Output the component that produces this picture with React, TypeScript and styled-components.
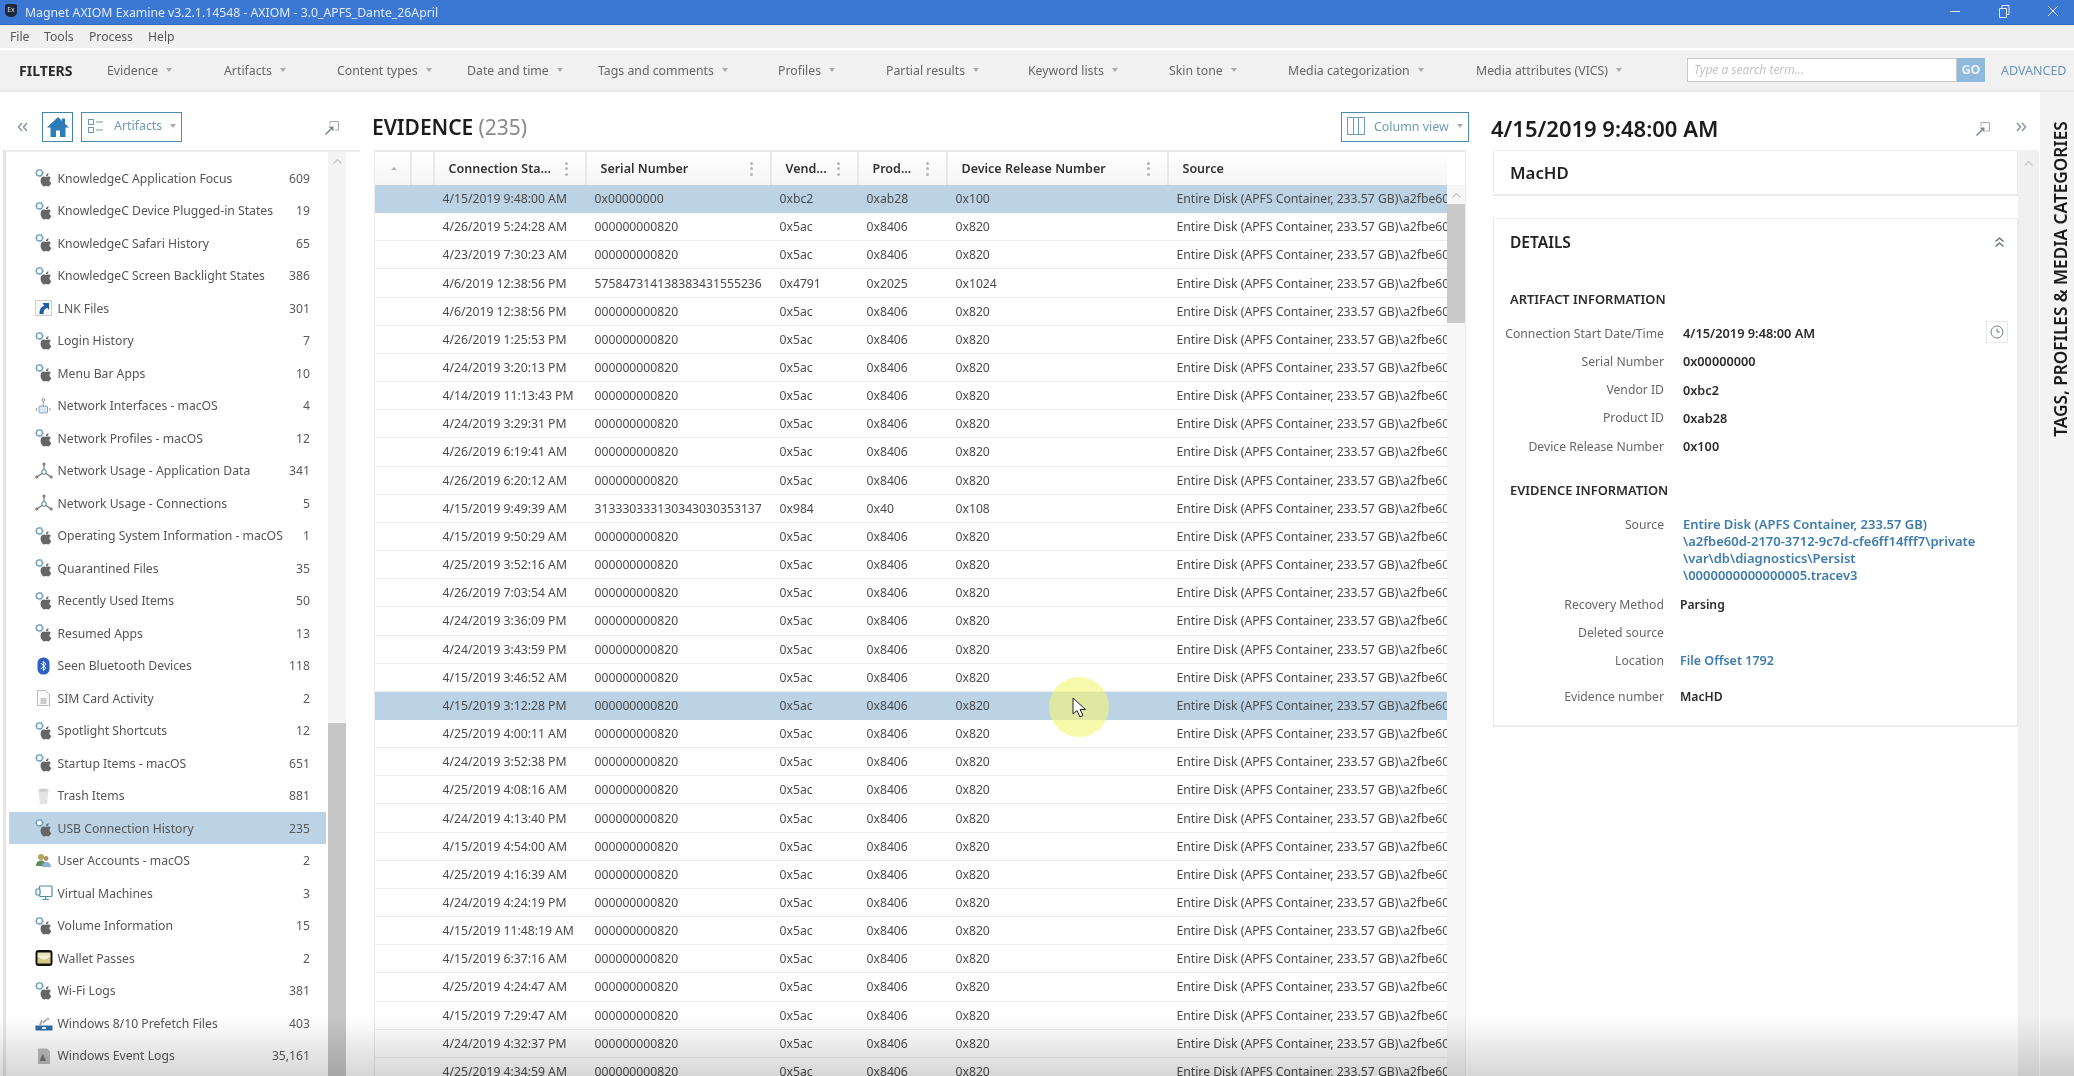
import React from "react";
import styled, { createGlobalStyle } from "styled-components";

const FONT = `"Noto Sans", "Open Sans", "Liberation Sans", sans-serif`;

const Global = createGlobalStyle`
  html, body { margin: 0; padding: 0; background: #fff; overflow: hidden; }
  * { box-sizing: border-box; }
  body { font-family: ${FONT}; }
`;

const Window = styled.div`
  position: relative;
  width: 2074px;
  height: 1076px;
  overflow: hidden;
  background: #fff;
  filter: blur(0.35px);
  font-family: ${FONT};
`;

const TitleBar = styled.header`
  height: 25px;
  background: #3a78d4;
  border-bottom: 1px solid #3369b4;
  display: flex;
  align-items: center;
  padding-left: 5px;
  color: #dfe9f8;
  font-size: 12.25px;
`;
const AppIcon = styled.span`
  width: 12px;
  height: 13px;
  background: #1e2a3c;
  border-radius: 2px 2px 5px 5px;
  color: #ddd;
  font-size: 7px;
  line-height: 11px;
  text-align: center;
  margin-right: 8px;
  margin-top: -3px;
`;
const TitleText = styled.span`
  flex: 1;
  margin-top: 1px;
`;
const WinControls = styled.div`
  display: flex;
  align-items: center;
  color: #e4edf9;
  margin-right: -4px;
  margin-top: -2px;
`;
const WinBtn = styled.span<{ $w: number }>`
  width: ${(p) => p.$w}px;
  display: flex;
  justify-content: center;
`;

const MenuBar = styled.nav`
  height: 23px;
  background: #f0f0f0;
  display: flex;
  align-items: center;
  padding-left: 10px;
  color: #555;
  font-size: 12.2px;
`;
const MenuItem = styled.span<{ $w: number }>`
  width: ${(p) => p.$w}px;
`;

const FilterBar = styled.div`
  margin-top: 2px;
  background: #f1f1f1;
  border-bottom: 2px solid #eaeaea;
  display: flex;
  align-items: center;
  padding-left: 19px;
  color: #666;
  font-size: 12.3px;
  height: 42px;
`;
const FiltersLabel = styled.strong`
  width: 88px;
  color: #2c2c2c;
  font-size: 14px;
  font-weight: 700;
`;
const FilterItem = styled.span<{ $w: number }>`
  width: ${(p) => p.$w}px;
  display: flex;
  align-items: center;
  white-space: nowrap;
`;
const Caret = styled.i`
  display: inline-block;
  width: 0;
  height: 0;
  margin-left: 8px;
  border-left: 3.5px solid transparent;
  border-right: 3.5px solid transparent;
  border-top: 4px solid #aaa;
`;
const SearchBox = styled.div`
  width: 270px;
  height: 24px;
  background: #fff;
  border: 1px solid #c9c9c9;
  color: #c4c4c4;
  font-style: italic;
  font-size: 12px;
  line-height: 22px;
  padding-left: 6px;
`;
const GoButton = styled.span`
  width: 28px;
  height: 24px;
  background: #8fbadb;
  color: #e9f2f9;
  font-weight: 700;
  font-size: 12.5px;
  line-height: 24px;
  text-align: center;
`;
const AdvancedLink = styled.span`
  margin-left: 16px;
  color: #6b96b5;
  font-size: 12.5px;
`;

const Main = styled.main`
  display: flex;
  height: 984px;
`;

const LeftPane = styled.section`
  width: 360px;
  padding-left: 6px;
  position: relative;
  &::before {
    content: "";
    position: absolute;
    left: 3px;
    top: 58px;
    bottom: 0;
    width: 3px;
    background: #e6e6e6;
  }
`;
const PaneTools = styled.div`
  height: 58px;
  display: flex;
  align-items: center;
  padding-left: 11px;
  position: relative;
  padding-top: 11px;
`;
const Chevrons = styled.span`
  display: inline-flex;
  width: 14px;
`;
const HomeBtn = styled.button`
  width: 31px;
  height: 30px;
  margin-left: 11px;
  border: 1px solid #3f86a8;
  background: #fff;
  padding: 0;
  display: flex;
  align-items: center;
  justify-content: center;
`;
const OutlineBtn = styled.button<{ $w: number }>`
  width: ${(p) => p.$w}px;
  height: 30px;
  border: 1px solid #4d8cab;
  background: #fff;
  padding: 0 0 2px 5px;
  display: flex;
  align-items: center;
  color: #6f9ab6;
  font-family: ${FONT};
  font-size: 12.4px;
`;
const ArtifactsBtn = styled(OutlineBtn)`
  margin-left: 8px;
`;
const BtnLabel = styled.span`
  margin-left: 9px;
`;
const PinSlot = styled.span`
  position: absolute;
  right: 20px;
  top: 28px;
  display: flex;
`;
const ListFrame = styled.div`
  height: 926px;
  display: flex;
  border-top: 2px solid #eee;
`;
const List = styled.ul`
  list-style: none;
  margin: 0;
  padding: 9.75px 0 0 3px;
  width: 320px;
`;
const ListRow = styled.li<{ $sel?: boolean }>`
  height: 32.5px;
  display: flex;
  align-items: center;
  padding: 0 16px 0 26px;
  background: ${(p) => (p.$sel ? "#bcd3e6" : "transparent")};
  color: #555;
  font-size: 12.2px;
  white-space: nowrap;
`;
const RowIcon = styled.span`
  width: 18px;
  height: 18px;
  margin-right: 4.5px;
  display: flex;
  flex: none;
`;
const RowName = styled.span`
  flex: 1;
`;
const RowCount = styled.span`
  color: #5a5a5a;
`;
const ListScroll = styled.div`
  margin-left: 2px;
  width: 18px;
  background: #f4f4f4;
  position: relative;
  display: flex;
  justify-content: center;
  padding-top: 6px;
`;
const ListThumb = styled.div`
  position: absolute;
  left: 0;
  right: 0;
  top: 571px;
  bottom: 0;
  background: #c6c6c6;
`;

const Center = styled.section`
  width: 1120px;
  padding-left: 14px;
`;
const CenterHead = styled.div`
  height: 58px;
  display: flex;
  align-items: center;
  padding-top: 11px;
  position: relative;
`;
const PageTitle = styled.h1`
  margin: 0 0 0 -2px;
  font-size: 21px;
  font-weight: 600;
  color: #1c1c1c;
  letter-spacing: -0.05px;
`;
const TitleCount = styled.span`
  font-weight: 400;
  color: #8a8a8a;
`;
const ColumnBtn = styled(OutlineBtn)`
  position: absolute;
  right: 11px;
  top: 20px;
`;
const Table = styled.div`
  width: 1092px;
  height: 926px;
  border-top: 2px solid #e9e9e9;
  border-left: 1px solid #eaeaea;
  border-right: 1px solid #eaeaea;
  position: relative;
  overflow: hidden;
`;
const COLS = "37px 23px 152px 185px 87px 89px 221px 279px";
const HeadRow = styled.div`
  display: grid;
  grid-template-columns: ${COLS};
  height: 33px;
  background: linear-gradient(#fff, #f5f5f5);
  width: 1072px;
`;
const HeadCell = styled.div`
  display: flex;
  align-items: center;
  justify-content: space-between;
  padding: 0 17.5px 0 13.5px;
  border-right: 2px solid #e8e8e8;
  font-size: 12.5px;
  font-weight: 600;
  color: #333;
  white-space: nowrap;
  &:last-child {
    border-right: 0;
  }
`;
const SortCell = styled(HeadCell)`
  justify-content: center;
  padding: 0;
`;
const Kebab = styled.span`
  display: flex;
  flex-direction: column;
  gap: 2.5px;
  & > i {
    width: 3px;
    height: 3px;
    background: #b5b5b5;
    border-radius: 50%;
  }
`;
const SortUp = styled.i`
  width: 0;
  height: 0;
  margin-left: 2px;
  border-left: 3px solid transparent;
  border-right: 3px solid transparent;
  border-bottom: 3.5px solid #b5b5b5;
`;
const BodyRow = styled.div<{ $sel?: boolean }>`
  display: grid;
  grid-template-columns: ${COLS};
  height: 28.17px;
  width: 1072px;
  background: ${(p) => (p.$sel ? "#bcd3e6" : "#fff")};
  border-bottom: 1px solid ${(p) => (p.$sel ? "#bcd3e6" : "#ececec")};
  align-items: center;
  font-size: 12.2px;
  color: #4a4a4a;
  white-space: nowrap;
  overflow: hidden;
`;
const Cell = styled.div`
  padding-left: 7.5px;
  overflow: hidden;
`;
const TableScroll = styled.div`
  position: absolute;
  right: 0;
  top: 33px;
  bottom: 0;
  width: 18px;
  background: #f6f6f6;
  display: flex;
  justify-content: center;
  padding-top: 7px;
`;
const TableThumb = styled.div`
  position: absolute;
  left: 0;
  right: 0;
  top: 19px;
  height: 119px;
  background: #c9c9c9;
`;
const TableHeadFill = styled.div`
  position: absolute;
  right: 0;
  top: 0;
  height: 33px;
  width: 18px;
  background: #fff;
`;

const Highlight = styled.div`
  position: absolute;
  left: 1049px;
  top: 677px;
  width: 60px;
  height: 60px;
  border-radius: 50%;
  background: rgba(246, 246, 120, 0.62);
  z-index: 5;
`;
const Pointer = styled.svg`
  position: absolute;
  left: 1072px;
  top: 697px;
  z-index: 6;
`;

const RightPane = styled.aside`
  width: 560px;
  padding-left: 11px;
  position: relative;
`;
const RightHead = styled.div`
  height: 58px;
  display: flex;
  align-items: center;
  position: relative;
  padding-top: 13px;
`;
const DateTitle = styled.h2`
  margin: 0;
  font-size: 22px;
  font-weight: 600;
  color: #1c1c1c;
`;
const RightPin = styled.span`
  position: absolute;
  left: 484px;
  top: 29px;
  display: flex;
`;
const RightChev = styled.span`
  position: absolute;
  left: 525px;
  top: 30px;
  display: flex;
`;
const RightTrack = styled.div`
  position: absolute;
  left: 538px;
  top: 58px;
  bottom: 0;
  width: 21px;
  background: #f0f0f0;
  display: flex;
  justify-content: center;
  padding-top: 10px;
`;
const Card = styled.div`
  width: 526px;
  margin-left: 2px;
  background: #fff;
  border: 1px solid #ececec;
  border-width: 1px 2px 2px 1px;
`;
const DeviceCard = styled(Card)`
  height: 46px;
  padding: 0 16px;
  display: flex;
  align-items: center;
  font-size: 16.8px;
  font-weight: 600;
  color: #222;
`;
const DetailsCard = styled(Card)`
  margin-top: 22px;
  height: 509px;
  position: relative;
`;
const DetailsHead = styled.div`
  height: 45px;
  margin-bottom: 2px;
  padding: 0 12px 0 16px;
  display: flex;
  align-items: center;
  justify-content: space-between;
  font-size: 15.5px;
  font-weight: 600;
  color: #222;
`;
const SectionTitle = styled.h3<{ $mt: number }>`
  margin: ${(p) => p.$mt}px 0 0 16px;
  height: 24px;
  line-height: 24px;
  font-size: 12.9px;
  font-weight: 600;
  color: #2c2c2c;
`;
const DetailRow = styled.div<{ $mt?: number; $inset?: number }>`
  display: grid;
  grid-template-columns: 170px 1fr;
  column-gap: ${(p) => p.$inset ?? 19}px;
  margin-top: ${(p) => p.$mt ?? 0}px;
  min-height: 28.25px;
  align-items: center;
  font-size: 12.2px;
`;
const LinkRow = styled(DetailRow)`
  align-items: start;
  line-height: 17.3px;
`;
const Label = styled.span`
  text-align: right;
  color: #666;
  white-space: nowrap;
`;
const Value = styled.span<{ $size?: number }>`
  font-size: ${(p) => p.$size ?? 12.2}px;
  font-weight: 600;
  color: #2b2b2b;
  white-space: nowrap;
`;
const LinkValue = styled(Value)`
  color: #3f7cac;
`;
const ClockBox = styled.span`
  position: absolute;
  left: 492px;
  top: 102px;
  width: 22px;
  height: 22px;
  border: 1px solid #e8e8e8;
  display: flex;
  align-items: center;
  justify-content: center;
`;

const SideTab = styled.aside`
  width: 34px;
  background: #f3f3f3;
  position: relative;
`;
const SideLabel = styled.div`
  position: absolute;
  left: 20px;
  top: 187px;
  white-space: nowrap;
  transform: translate(-50%, -50%) rotate(-90deg);
  font-size: 17.2px;
  font-weight: 600;
  color: #1c1c1c;
`;

const BottomShade = styled.div`
  position: absolute;
  left: 0;
  right: 0;
  bottom: 0;
  height: 60px;
  background: linear-gradient(rgba(0, 0, 0, 0), rgba(0, 0, 0, 0.16));
  pointer-events: none;
  z-index: 8;
`;

const AppleGear = () => (
  <svg width="18" height="18" viewBox="0 0 18 18">
    <path
      transform="translate(3 3) scale(0.66)"
      fill="#666"
      d="M18.71 19.5c-.83 1.24-1.71 2.45-3.05 2.47-1.34.03-1.77-.79-3.29-.79-1.53 0-2 .77-3.27.82-1.31.05-2.3-1.32-3.14-2.53C4.25 17 2.94 12.45 4.7 9.39c.87-1.52 2.43-2.48 4.12-2.51 1.28-.02 2.5.87 3.29.87.78 0 2.26-1.07 3.81-.91.65.03 2.47.26 3.64 1.98-.09.06-2.17 1.28-2.15 3.81.03 3.02 2.65 4.03 2.68 4.04-.03.07-.42 1.44-1.38 2.83M13 3.5c.73-.83 1.94-1.46 2.94-1.5.13 1.17-.34 2.35-1.04 3.19-.69.85-1.83 1.51-2.95 1.42-.15-1.15.41-2.35 1.05-3.11z"
    />
    <circle cx="4.4" cy="3.9" r="3" fill="#fff" stroke="#6f9fbd" strokeWidth="1.2" />
    <circle cx="4.4" cy="3.9" r="3.900" fill="none" stroke="#6f9fbd" strokeWidth="0.9" strokeDasharray="1.2 1.6" />
  </svg>
);
const LnkIcon = () => (
  <svg width="18" height="18" viewBox="0 0 18 18">
    <rect x="0.5" y="1.5" width="16" height="15" fill="#f7f7f7" stroke="#cfcfcf" />
    <path d="M4.500 15C4.500 9.500 6.500 7.500 9.500 7L7.500 4H14v7l-2-2.200C9.500 9.800 8.500 12 8.500 15z" fill="#1d5da6" />
  </svg>
);
const NetIfIcon = () => (
  <svg width="18" height="18" viewBox="0 0 18 18" fill="none">
    <rect x="4" y="9" width="8.5" height="7" rx="1" fill="#dbe7f2" stroke="#8aa9c4" />
    <path d="M8.3 5v5" stroke="#8aa9c4" />
    <circle cx="8.3" cy="3" r="1.4" stroke="#8d8d8d" />
    <path d="M1.5 11v3M15 11v3" stroke="#9a9a9a" />
  </svg>
);
const NetUsageIcon = () => (
  <svg width="18" height="18" viewBox="0 0 18 18" fill="none" stroke="#707070" strokeWidth="1.1">
    <circle cx="9" cy="10" r="2.2" stroke="#5f8fb0" />
    <path d="M9 7.5V3M7 11.5l-4.5 3M11 11.5l4.5 3" />
    <circle cx="9" cy="2" r="1" />
    <circle cx="1.8" cy="15" r="1" />
    <circle cx="16.2" cy="15" r="1" />
  </svg>
);
const BluetoothIcon = () => (
  <svg width="18" height="18" viewBox="0 0 18 18">
    <rect x="2.5" y="0.5" width="12" height="17" rx="5.5" fill="#2f5fc4" />
    <path d="M5.8 6l5 5-2.4 2.6V4.3L10.8 7l-5 5" fill="none" stroke="#fff" strokeWidth="1" />
  </svg>
);
const SimIcon = () => (
  <svg width="18" height="18" viewBox="0 0 18 18" fill="none" stroke="#b9b9b9">
    <path d="M2.5 1.5h8l4 4v11h-12z" fill="#fbfbfb" />
    <path d="M5.5 10h6M5.5 12h6M5.5 14h6" stroke="#999" />
  </svg>
);
const TrashIcon = () => (
  <svg width="18" height="18" viewBox="0 0 18 18">
    <path d="M3.5 3.5h10l-1.2 12.5a1 1 0 0 1-1 .9H5.7a1 1 0 0 1-1-.9z" fill="#e4e4e4" />
    <ellipse cx="8.5" cy="3.2" rx="5" ry="1.6" fill="#cfcfcf" />
  </svg>
);
const UsersIcon = () => (
  <svg width="18" height="18" viewBox="0 0 18 18">
    <circle cx="6" cy="5" r="3" fill="#b9a15e" />
    <path d="M1 14c0-4 2.5-5.5 5-5.5S11 10 11 14z" fill="#5c8a58" />
    <circle cx="11" cy="6.5" r="2.4" fill="#a98f6a" />
    <path d="M7 15c0-3.5 2-5 4.5-5s4.5 1.500 4.500 5z" fill="#8fb3ce" />
  </svg>
);
const VmIcon = () => (
  <svg width="18" height="18" viewBox="0 0 18 18" fill="none" stroke="#4c8eb0" strokeWidth="1.200">
    <rect x="4.5" y="2" width="12.500" height="10.500" rx="1" />
    <path d="M10.800 12.500V15M7.500 15.500h6.500" />
    <rect x="1" y="5" width="4" height="6" rx="1" fill="#fff" />
  </svg>
);
const WalletIcon = () => (
  <svg width="18" height="18" viewBox="0 0 18 18">
    <rect x="0.5" y="1" width="17" height="16" rx="3" fill="#111" />
    <rect x="2.500" y="3.500" width="13" height="4.500" fill="#e8e3b4" />
    <path d="M2.500 8.500h13v6h-13z" fill="#d6c986" />
    <path d="M2.500 8.500c3 0 4 2 6.500 2s3.500-2 6.500-2v-1.500h-13z" fill="#f3f0dc" />
  </svg>
);
const PrefetchIcon = () => (
  <svg width="18" height="18" viewBox="0 0 18 18">
    <rect x="0.500" y="11.500" width="17" height="5" fill="#2f6aa6" />
    <path d="M5 11l2-5M8 9l4-4" stroke="#9a9a9a" strokeWidth="1.500" />
    <circle cx="13" cy="5" r="1.600" fill="#c2c2c2" />
    <rect x="7" y="13" width="4" height="2" fill="#e8f0f7" />
  </svg>
);
const EventIcon = () => (
  <svg width="18" height="18" viewBox="0 0 18 18">
    <path d="M3 1.500h9l3 3v12.500h-12z" fill="#bbbbbb" />
    <path d="M5 14c1-5 2-5 3-7l3 7z" fill="#77736f" />
  </svg>
);

const iconFor: Record<string, React.ReactNode> = {
  a: <AppleGear />,
  l: <LnkIcon />,
  i: <NetIfIcon />,
  n: <NetUsageIcon />,
  b: <BluetoothIcon />,
  s: <SimIcon />,
  t: <TrashIcon />,
  u: <UsersIcon />,
  v: <VmIcon />,
  w: <WalletIcon />,
  p: <PrefetchIcon />,
  e: <EventIcon />,
};

const artifacts: [string, string, string][] = [
  ["a", "KnowledgeC Application Focus", "609"],
  ["a", "KnowledgeC Device Plugged-in States", "19"],
  ["a", "KnowledgeC Safari History", "65"],
  ["a", "KnowledgeC Screen Backlight States", "386"],
  ["l", "LNK Files", "301"],
  ["a", "Login History", "7"],
  ["a", "Menu Bar Apps", "10"],
  ["i", "Network Interfaces - macOS", "4"],
  ["a", "Network Profiles - macOS", "12"],
  ["n", "Network Usage - Application Data", "341"],
  ["n", "Network Usage - Connections", "5"],
  ["a", "Operating System Information - macOS", "1"],
  ["a", "Quarantined Files", "35"],
  ["a", "Recently Used Items", "50"],
  ["a", "Resumed Apps", "13"],
  ["b", "Seen Bluetooth Devices", "118"],
  ["s", "SIM Card Activity", "2"],
  ["a", "Spotlight Shortcuts", "12"],
  ["a", "Startup Items - macOS", "651"],
  ["t", "Trash Items", "881"],
  ["a", "USB Connection History", "235"],
  ["u", "User Accounts - macOS", "2"],
  ["v", "Virtual Machines", "3"],
  ["a", "Volume Information", "15"],
  ["w", "Wallet Passes", "2"],
  ["a", "Wi-Fi Logs", "381"],
  ["p", "Windows 8/10 Prefetch Files", "403"],
  ["e", "Windows Event Logs", "35,161"],
];

const SRC = "Entire Disk (APFS Container, 233.57 GB)\\a2fbe60";
const S = "000000000820";
const dates = [
  "4/26/2019 5:24:28 AM", "4/23/2019 7:30:23 AM", "", "4/6/2019 12:38:56 PM", "4/26/2019 1:25:53 PM",
  "4/24/2019 3:20:13 PM", "4/14/2019 11:13:43 PM", "4/24/2019 3:29:31 PM", "4/26/2019 6:19:41 AM",
  "4/26/2019 6:20:12 AM", "", "4/15/2019 9:50:29 AM", "4/25/2019 3:52:16 AM", "4/26/2019 7:03:54 AM",
  "4/24/2019 3:36:09 PM", "4/24/2019 3:43:59 PM", "4/15/2019 3:46:52 AM", "4/15/2019 3:12:28 PM",
  "4/25/2019 4:00:11 AM", "4/24/2019 3:52:38 PM", "4/25/2019 4:08:16 AM", "4/24/2019 4:13:40 PM",
  "4/15/2019 4:54:00 AM", "4/25/2019 4:16:39 AM", "4/24/2019 4:24:19 PM", "4/15/2019 11:48:19 AM",
  "4/15/2019 6:37:16 AM", "4/25/2019 4:24:47 AM", "4/15/2019 7:29:47 AM", "4/24/2019 4:32:37 PM",
  "4/25/2019 4:34:59 AM",
];
const rows: string[][] = [
  ["4/15/2019 9:48:00 AM", "0x00000000", "0xbc2", "0xab28", "0x100"],
  ...dates.map((d, i) => {
    if (i === 2) return ["4/6/2019 12:38:56 PM", "575847314138383431555236", "0x4791", "0x2025", "0x1024"];
    if (i === 10) return ["4/15/2019 9:49:39 AM", "313330333130343030353137", "0x984", "0x40", "0x108"];
    return [d, S, "0x5ac", "0x8406", "0x820"];
  }),
];

const heads: [string, boolean][] = [
  ["Connection Sta...", true],
  ["Serial Number", true],
  ["Vend...", true],
  ["Prod...", true],
  ["Device Release Number", true],
  ["Source", false],
];
const filters: [string, number][] = [
  ["Evidence", 117],
  ["Artifacts", 113],
  ["Content types", 130],
  ["Date and time", 131],
  ["Tags and comments", 180],
  ["Profiles", 108],
  ["Partial results", 142],
  ["Keyword lists", 141],
  ["Skin tone", 119],
  ["Media categorization", 188],
  ["Media attributes (VICS)", 211],
];
const artifactInfo: [string, string, number][] = [
  ["Connection Start Date/Time", "4/15/2019 9:48:00 AM", 12.8],
  ["Serial Number", "0x00000000", 12.7],
  ["Vendor ID", "0xbc2", 12.7],
  ["Product ID", "0xab28", 12.7],
  ["Device Release Number", "0x100", 12.7],
];

const DoubleChevron = ({ dir = "left", color = "#8c9aa6" }: { dir?: "left" | "right" | "up"; color?: string }) => {
  const rot = dir === "left" ? 0 : dir === "right" ? 180 : 90;
  return (
    <svg width="11" height="10" viewBox="0 0 11 10" fill="none" stroke={color} strokeWidth="1.6" transform={`rotate(${rot})`}>
      <path d="M5 1L1.500 5 5 9M10 1L6.500 5 10 9" />
    </svg>
  );
};
const UpChevron = () => (
  <svg width="11" height="7" viewBox="0 0 11 7" fill="none" stroke="#c8c8c8" strokeWidth="1.200">
    <path d="M1.500 5.500L5.500 1.500l4 4" />
  </svg>
);
const PinIcon = () => (
  <svg width="16" height="16" viewBox="0 0 16 16" fill="none">
    <path d="M6 5V1.500h8.500V10H11" stroke="#a8a8a8" />
    <path d="M1.500 14.500L8 8" stroke="#7d8b96" strokeWidth="1.600" />
    <path d="M4.500 6.500h5v5z" fill="#7d8b96" />
  </svg>
);

export default function App() {
  return (
    <Window>
      <Global />
      <TitleBar>
        <AppIcon>Ex</AppIcon>
        <TitleText>Magnet AXIOM Examine v3.2.1.14548 - AXIOM - 3.0_APFS_Dante_26April</TitleText>
        <WinControls>
          <WinBtn $w={50}>
            <svg width="12" height="12" viewBox="0 0 12 12" stroke="currentColor"><path d="M1 6.500h10" /></svg>
          </WinBtn>
          <WinBtn $w={48}>
            <svg width="12" height="14" viewBox="0 0 12 14" fill="none" stroke="currentColor"><path d="M1.500 4.500h7v9h-7zM4 4.500V1.500h7v9H8.500" /></svg>
          </WinBtn>
          <WinBtn $w={50}>
            <svg width="12" height="12" viewBox="0 0 12 12" stroke="currentColor"><path d="M1 1l10 10M11 1L1 11" /></svg>
          </WinBtn>
        </WinControls>
      </TitleBar>
      <MenuBar>
        <MenuItem $w={34}>File</MenuItem>
        <MenuItem $w={45}>Tools</MenuItem>
        <MenuItem $w={59}>Process</MenuItem>
        <MenuItem $w={40}>Help</MenuItem>
      </MenuBar>
      <FilterBar>
        <FiltersLabel>FILTERS</FiltersLabel>
        {filters.map(([t, w]) => (
          <FilterItem key={t} $w={w}>
            {t}
            <Caret />
          </FilterItem>
        ))}
        <SearchBox>Type a search term...</SearchBox>
        <GoButton>GO</GoButton>
        <AdvancedLink>ADVANCED</AdvancedLink>
      </FilterBar>
      <Main>
        <LeftPane>
          <PaneTools>
            <Chevrons><DoubleChevron /></Chevrons>
            <HomeBtn>
              <svg width="24" height="24" viewBox="0 0 24 24">
                <path d="M12 2L1 12.500h3.500V22H10v-6.500h4V22h5.500v-9.500H23L19 8.700V3.500h-3v2.300z" fill="#2e7cb8" />
              </svg>
            </HomeBtn>
            <ArtifactsBtn $w={101}>
              <svg width="18" height="18" viewBox="0 0 18 18" fill="none" stroke="#6f9ab6">
                <rect x="1.500" y="2.500" width="5" height="5" />
                <rect x="1.500" y="10.500" width="5" height="5" />
                <path d="M9 5h7M9 13h7" />
              </svg>
              <BtnLabel>Artifacts</BtnLabel>
              <Caret />
            </ArtifactsBtn>
            <PinSlot><PinIcon /></PinSlot>
          </PaneTools>
          <ListFrame>
            <List>
              {artifacts.map(([k, name, n]) => (
                <ListRow key={name} $sel={name === "USB Connection History"}>
                  <RowIcon>{iconFor[k]}</RowIcon>
                  <RowName>{name}</RowName>
                  <RowCount>{n}</RowCount>
                </ListRow>
              ))}
            </List>
            <ListScroll>
              <UpChevron />
              <ListThumb />
            </ListScroll>
          </ListFrame>
        </LeftPane>
        <Center>
          <CenterHead>
            <PageTitle>
              EVIDENCE <TitleCount>(235)</TitleCount>
            </PageTitle>
            <ColumnBtn $w={128}>
              <svg width="18" height="18" viewBox="0 0 18 18" fill="none" stroke="#6f9ab6">
                <rect x="0.500" y="0.500" width="17" height="17" />
                <path d="M6.500 1v16M11.500 1v16" />
              </svg>
              <BtnLabel>Column view</BtnLabel>
              <Caret />
            </ColumnBtn>
          </CenterHead>
          <Table>
            <HeadRow>
              <SortCell><SortUp /></SortCell>
              <SortCell />
              {heads.map(([t, k]) => (
                <HeadCell key={t}>
                  {t}
                  {k && (
                    <Kebab>
                      <i /><i /><i />
                    </Kebab>
                  )}
                </HeadCell>
              ))}
            </HeadRow>
            {rows.map((r, i) => (
              <BodyRow key={i} $sel={i === 0 || i === 18}>
                <span />
                <span />
                {r.map((c, j) => (
                  <Cell key={j}>{c}</Cell>
                ))}
                <Cell>{SRC}</Cell>
              </BodyRow>
            ))}
            <TableHeadFill />
            <TableScroll>
              <UpChevron />
              <TableThumb />
            </TableScroll>
          </Table>
          <Highlight />
          <Pointer width="16" height="22" viewBox="0 0 16 22">
            <path d="M1 1v16l4-3.500L8 20l3-1.500-3-6h5.500z" fill="#fff" stroke="#222" strokeWidth="1" />
          </Pointer>
        </Center>
        <RightPane>
          <RightHead>
            <DateTitle>4/15/2019 9:48:00 AM</DateTitle>
            <RightPin><PinIcon /></RightPin>
            <RightChev><DoubleChevron dir="right" /></RightChev>
          </RightHead>
          <RightTrack><UpChevron /></RightTrack>
          <DeviceCard>MacHD</DeviceCard>
          <DetailsCard>
            <DetailsHead>
              DETAILS
              <DoubleChevron dir="up" color="#6e7c88" />
            </DetailsHead>
            <SectionTitle $mt={23}>ARTIFACT INFORMATION</SectionTitle>
            {artifactInfo.map(([l, v, s], i) => (
              <DetailRow key={l} $mt={i === 0 ? 8 : 0}>
                <Label>{l}</Label>
                <Value $size={s}>{v}</Value>
              </DetailRow>
            ))}
            <ClockBox>
              <svg width="14" height="14" viewBox="0 0 14 14" fill="none" stroke="#6f7f8b">
                <circle cx="7" cy="7" r="6" />
                <path d="M7 3.500V7h3" />
              </svg>
            </ClockBox>
            <SectionTitle $mt={18}>EVIDENCE INFORMATION</SectionTitle>
            <LinkRow $mt={13.3}>
              <Label>Source</Label>
              <LinkValue $size={13}>
                Entire Disk (APFS Container, 233.57 GB)
                <br />
                \a2fbe60d-2170-3712-9c7d-cfe6ff14fff7\private
                <br />
                \var\db\diagnostics\Persist
                <br />
                \0000000000000005.tracev3
              </LinkValue>
            </LinkRow>
            <DetailRow $mt={5.3} $inset={16}>
              <Label>Recovery Method</Label>
              <Value>Parsing</Value>
            </DetailRow>
            <DetailRow $inset={16}>
              <Label>Deleted source</Label>
              <Value />
            </DetailRow>
            <DetailRow $inset={16}>
              <Label>Location</Label>
              <LinkValue $size={12.5}>File Offset 1792</LinkValue>
            </DetailRow>
            <DetailRow $mt={7.3} $inset={16}>
              <Label>Evidence number</Label>
              <Value>MacHD</Value>
            </DetailRow>
          </DetailsCard>
        </RightPane>
        <SideTab>
          <SideLabel>TAGS, PROFILES &amp; MEDIA CATEGORIES</SideLabel>
        </SideTab>
      </Main>
      <BottomShade />
    </Window>
  );
}
